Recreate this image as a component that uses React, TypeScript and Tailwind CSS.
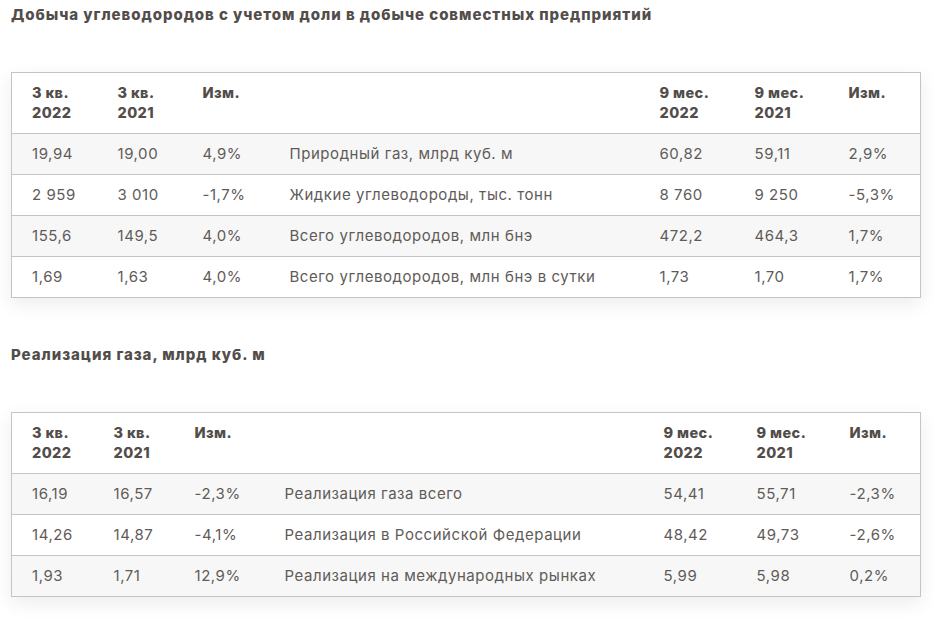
const font = { fontFamily: "Inter, 'Noto Sans', sans-serif" };

type Table = {
  title: string;
  widths: string[];
  rows: string[][];
};

const header = ["3 кв.|2022", "3 кв.|2021", "Изм.", "", "9 мес.|2022", "9 мес.|2021", "Изм."];

const tables: Table[] = [
  {
    title: "Добыча углеводородов с учетом доли в добыче совместных предприятий",
    widths: ["w-[86px]", "w-[85px]", "w-[87px]", "w-[370px]", "w-[95px]", "w-[94px]", "w-[92px]"],
    rows: [
      ["19,94", "19,00", "4,9%", "Природный газ, млрд куб. м", "60,82", "59,11", "2,9%"],
      ["2 959", "3 010", "-1,7%", "Жидкие углеводороды, тыс. тонн", "8 760", "9 250", "-5,3%"],
      ["155,6", "149,5", "4,0%", "Всего углеводородов, млн бнэ", "472,2", "464,3", "1,7%"],
      ["1,69", "1,63", "4,0%", "Всего углеводородов, млн бнэ в сутки", "1,73", "1,70", "1,7%"],
    ],
  },
  {
    title: "Реализация газа, млрд куб. м",
    widths: ["w-[82px]", "w-[81px]", "w-[90px]", "w-[379px]", "w-[93px]", "w-[93px]", "w-[91px]"],
    rows: [
      ["16,19", "16,57", "-2,3%", "Реализация газа всего", "54,41", "55,71", "-2,3%"],
      ["14,26", "14,87", "-4,1%", "Реализация в Российской Федерации", "48,42", "49,73", "-2,6%"],
      ["1,93", "1,71", "12,9%", "Реализация на международных рынках", "5,99", "5,98", "0,2%"],
    ],
  },
];

function DataTable({ t }: { t: Table }) {
  return (
    <table className="w-[909px] table-fixed border-collapse border border-[#c4c4c4] bg-white shadow-[0_6px_18px_rgba(0,0,0,0.08)]">
      <colgroup>
        {t.widths.map((w, i) => (
          <col key={i} className={w} />
        ))}
      </colgroup>
      <thead>
        <tr>
          {header.map((h, i) => (
            <th
              key={i}
              className="px-5 pt-[10px] pb-[10px] text-left align-top text-[14.5px] font-extrabold leading-5 tracking-[0.4px] text-[#524d4a]"
            >
              {h.split("|").map((l, j) => (
                <div key={j}>{l}</div>
              ))}
            </th>
          ))}
        </tr>
      </thead>
      <tbody>
        {t.rows.map((r, i) => (
          <tr
            key={i}
            className={`border-t border-[#c4c4c4] ${i % 2 === 0 ? "bg-[#f7f7f7]" : "bg-white"}`}
          >
            {r.map((c, j) => (
              <td
                key={j}
                className="whitespace-nowrap px-5 py-[10px] text-[15px] leading-5 tracking-[0.55px] text-[#5f5b58]"
              >
                {c}
              </td>
            ))}
          </tr>
        ))}
      </tbody>
    </table>
  );
}

export default function App() {
  return (
    <div className="min-h-[620px] w-[934px] bg-white pl-[11px] pt-[5px]" style={font}>
      <h2 className="text-[15px] font-extrabold leading-5 tracking-[0.95px] text-[#524d4a]">{tables[0].title}</h2>
      <div className="mt-[47px]">
        <DataTable t={tables[0]} />
      </div>
      <h2 className="mt-[47px] text-[15px] font-extrabold leading-5 tracking-[0.95px] text-[#524d4a]">{tables[1].title}</h2>
      <div className="mt-[47px]">
        <DataTable t={tables[1]} />
      </div>
    </div>
  );
}
